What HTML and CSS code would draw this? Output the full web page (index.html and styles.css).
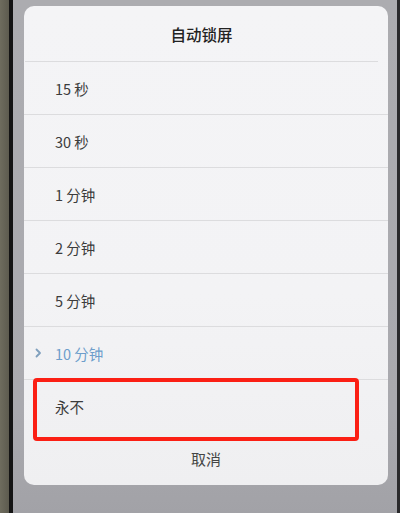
FILE: index.html
```html
<!DOCTYPE html>
<html lang="zh-CN">
<head>
<meta charset="utf-8">
<link rel="stylesheet" href="styles.css">
</head>
<body>
<div class="frame">
  <div class="bezel"></div>
  <div class="bezel-edge"></div>
  <div class="screen">
    <div class="dialog">
      <div class="title">自动锁屏</div>
      <ul class="options">
        <li class="option"><span class="mark"></span><span>15 秒</span></li>
        <li class="option"><span class="mark"></span><span>30 秒</span></li>
        <li class="option"><span class="mark"></span><span>1 分钟</span></li>
        <li class="option"><span class="mark"></span><span>2 分钟</span></li>
        <li class="option"><span class="mark"></span><span>5 分钟</span></li>
        <li class="option selected"><span class="mark"><svg width="7" height="10" viewBox="0 0 7 10"><polyline points="1.5,1.5 5,5 1.5,8.5" fill="none" stroke="#7f9fbd" stroke-width="1.8" stroke-linecap="round" stroke-linejoin="round"/></svg></span><span>10 分钟</span></li>
        <li class="option last"><span class="mark"></span><span>永不</span></li>
      </ul>
      <div class="cancel">取消</div>
      <div class="highlight"></div>
    </div>
  </div>
  <div class="bezel-right"></div>
</div>
</body>
</html>
```

FILE: styles.css
```css
html, body {
  margin: 0;
  padding: 0;
  width: 400px;
  height: 513px;
  overflow: hidden;
}
body {
  font-family: "Noto Sans CJK SC", "Noto Sans", sans-serif;
  background: #a8a8ad;
}
.frame {
  display: flex;
  height: 513px;
}
.bezel {
  width: 9px;
  background: linear-gradient(90deg, #6e6c5e, #5d5b4f);
}
.bezel-edge {
  width: 4px;
  background: #141414;
}
.screen {
  flex: 1;
  background: linear-gradient(180deg, #acacb0 0%, #a9a9ae 80%, #a2a2a7 100%);
  padding: 6px 9px 0 11px;
}
.bezel-right {
  width: 3px;
  background: #2a2a2c;
}
.dialog {
  position: relative;
  height: 479px;
  background: linear-gradient(180deg, #f4f4f6 0%, #f3f3f5 60%, #efeff1 100%);
  border-radius: 10px;
  display: flex;
  flex-direction: column;
}
.title {
  height: 55px;
  display: flex;
  align-items: center;
  justify-content: center;
  font-size: 15.5px;
  font-weight: 500;
  color: #222;
  border-bottom: 1px solid #dcdcde;
  margin: 0 10px 0 1px;
}
.options {
  list-style: none;
  margin: 0;
  padding: 0;
}
.option {
  height: 52px;
  border-bottom: 1px solid #dcdcde;
  display: flex;
  align-items: center;
  padding-left: 11px;
  font-size: 14.5px;
  color: #3c3c3c;
}
.option.last {
  border-bottom: none;
  height: 53px;
}
.mark {
  width: 20px;
  display: flex;
  align-items: center;
}
.selected {
  color: #6d9ecb;
}
.cancel {
  flex: 1;
  display: flex;
  align-items: center;
  justify-content: center;
  font-size: 15px;
  color: #444;
  padding-bottom: 2px;
}
.highlight {
  position: absolute;
  left: 9px;
  top: 372px;
  width: 318px;
  height: 55px;
  border: 4px solid #fb1f14;
  border-radius: 4px;
}
```
